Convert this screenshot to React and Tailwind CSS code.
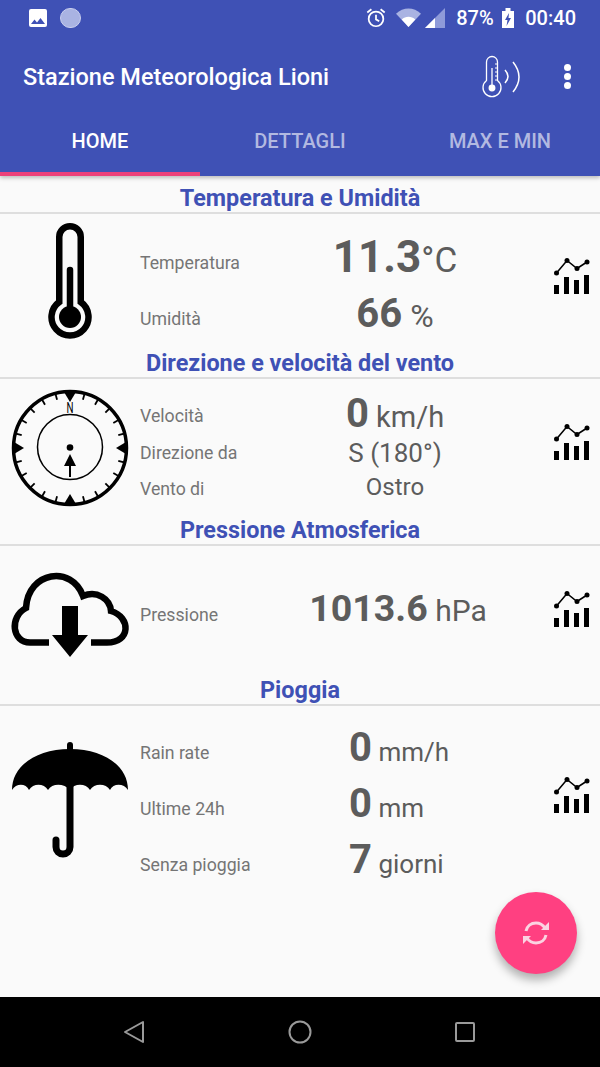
import React from "react";

const ChartIcon = () => (
  <svg viewBox="552 258 38 36" className="w-[38px] h-[36px] text-black">
    <path d="M555.500 273L566 260.500L576 268.500L586 262" fill="none" stroke="currentColor" strokeWidth="1.600" />
    <circle cx="555.500" cy="273" r="2.500" fill="currentColor" />
    <circle cx="566" cy="260.500" r="2.500" fill="currentColor" />
    <circle cx="576" cy="268.500" r="2.500" fill="currentColor" />
    <circle cx="586" cy="262" r="2.500" fill="currentColor" />
    <rect x="553" y="285" width="5" height="9" fill="currentColor" />
    <rect x="563" y="277" width="5" height="17" fill="currentColor" />
    <rect x="573" y="280" width="5" height="14" fill="currentColor" />
    <rect x="583" y="275" width="5" height="19" fill="currentColor" />
  </svg>
);

const Thermometer = () => (
  <svg viewBox="46 222 48 120" className="w-[48px] h-[120px]">
    <path
      d="M59.250 302V237A10.750 10.750 0 0 1 80.750 237V302A18.500 18.500 0 1 1 59.250 302Z"
      fill="none"
      stroke="black"
      strokeWidth="6.500"
    />
    <path d="M70 270V310" stroke="black" strokeWidth="6.500" strokeLinecap="round" />
    <circle cx="70" cy="317" r="11" fill="black" />
  </svg>
);

const ticks = Array.from({ length: 24 }, (_, i) => i * 15);

const Compass = () => (
  <svg viewBox="10 388 120 120" className="w-[120px] h-[120px]">
    <circle cx="70" cy="448" r="56.500" fill="none" stroke="black" strokeWidth="3.500" />
    {ticks.map((a) => (
      <line
        key={a}
        x1="70"
        y1="392"
        x2="70"
        y2="398"
        stroke="black"
        strokeWidth="1.800"
        transform={`rotate(${a} 70 448)`}
      />
    ))}
    {[0, 90, 180, 270].map((a) => (
      <path key={a} d="M64 392H76L70 402Z" fill="black" transform={`rotate(${a} 70 448)`} />
    ))}
    <circle cx="70" cy="447" r="32.500" fill="none" stroke="black" strokeWidth="1.500" />
    <text x="70" y="413" textAnchor="middle" fontSize="14" fill="black" fontFamily="Roboto, sans-serif" textLength="7" lengthAdjust="spacingAndGlyphs">
      N
    </text>
    <circle cx="70" cy="447.500" r="3.300" fill="black" />
    <path d="M70 454L76 466H71V477H69V466H64Z" fill="black" />
  </svg>
);

const Cloud = () => (
  <svg viewBox="10 570 120 88" className="w-[120px] h-[88px]">
    <path
      d="M49 641.500H30C12 641.500 9 616 26 607C28 570 72 564 83 595C97 589 110 598 111 610C131 616 131 641.500 107 641.500H91"
      fill="none"
      stroke="black"
      strokeWidth="6.500"
    />
    <path d="M62 605H78V634H88L70 656L52 634H62Z" fill="black" />
  </svg>
);

const Umbrella = () => (
  <svg viewBox="10 740 120 120" className="w-[120px] h-[120px]">
    <path
      d="M12 790C12 766 36 749 70 749C104 749 128 766 128 790C124 783 113 783 110 790C106 783 94 783 90 790C86 783 74 783 70 790C64 783 52 783 48 790C44 783 33 783 29 790C26 783 16 783 12 790Z"
      fill="black"
    />
    <path d="M70 745V752" stroke="black" strokeWidth="6" strokeLinecap="round" />
    <path d="M70 785V847A7 7 0 0 1 56 847V840" fill="none" stroke="black" strokeWidth="7" strokeLinecap="round" />
  </svg>
);

const StatusBar = () => (
  <div className="h-[35px] flex items-center text-white relative">
    <svg viewBox="0 0 24 24" className="ml-[26px] w-[24px] h-[24px]" fill="white">
      <path d="M21 19V5a2 2 0 0 0-2-2H5a2 2 0 0 0-2 2v14a2 2 0 0 0 2 2h14a2 2 0 0 0 2-2zM8.500 13.500l2.500 3 3.500-4.500 4.500 6H5l3.500-4.500z" />
    </svg>
    <div className="ml-[10px] w-[21px] h-[20px] rounded-full bg-[#a9b3e2] border border-[#c9cfee]" />
    <div className="flex-1" />
    <svg viewBox="0 0 24 24" className="w-[22px] h-[22px] mr-[9px]" fill="none" stroke="white" strokeWidth="1.900">
      <circle cx="12" cy="13" r="8" />
      <path d="M12 8.500V13.500L15.500 15.500M2.500 6L7 2.500M21.500 6L17 2.500" />
    </svg>
    <svg viewBox="0 0 24 18" className="w-[25px] h-[19px] mr-[4px]">
      <path d="M0 5.500C7 -1.500 17 -1.500 24 5.500L12 18Z" fill="#a9b3e2" />
      <path d="M5.500 11C9 7.500 15 7.500 18.500 11L12 18Z" fill="white" />
    </svg>
    <svg viewBox="0 0 20 20" className="w-[20px] h-[20px] mr-[11px]">
      <path d="M0 20L20 0V20Z" fill="#8f9bd9" />
      <path d="M0 20L10 10V20Z" fill="white" />
    </svg>
    <span className="text-[20px] font-medium w-[39px] whitespace-nowrap leading-none">87%</span>
    <svg viewBox="0 0 12 20" className="ml-[7px] w-[12px] h-[20px]">
      <path d="M0 3H3.500V0H8.500V3H12V20H0Z" fill="white" />
      <path d="M7 5L3 12H5.500L4.500 18L9 10H6.500Z" fill="#3f51b5" />
    </svg>
    <span className="ml-[11px] mr-[24px] text-[20px] font-medium leading-none">00:40</span>
  </div>
);

const Toolbar = () => (
  <div className="h-[85px] flex items-center text-white">
    <h1 className="ml-[23px] pt-[1px] text-[23.500px] font-medium whitespace-nowrap">Stazione Meteorologica Lioni</h1>
    <div className="flex-1" />
    <svg viewBox="480 55 42 43" className="w-[42px] h-[43px] mr-[40px] -mt-[3px]" fill="none" stroke="white" strokeWidth="1.300">
      <path d="M484.500 80.500V62A5.500 5.500 0 0 1 495.500 62V80.500A9 9 0 1 1 484.500 80.500Z" />
      <circle cx="490" cy="88" r="2.800" fill="white" />
      <path d="M490 86V68" />
      <path d="M493 64H495M493 68H495M493 72H495M493 76H495M493 80H495" strokeWidth="1" />
      <path d="M503 70Q509 76.500 503 83M511 62Q523 77 511 92" strokeWidth="1.500" />
    </svg>
    <div className="flex flex-col gap-[2px] mr-[29px] -mt-[3px]">
      <div className="w-[7px] h-[7px] rounded-full bg-white" />
      <div className="w-[7px] h-[7px] rounded-full bg-white" />
      <div className="w-[7px] h-[7px] rounded-full bg-white" />
    </div>
  </div>
);

const Tabs = () => (
  <div className="h-[56px] relative grid grid-cols-3 text-center text-[20px] font-medium">
    <div className="text-white pt-[6px] border-b-[4px] border-[#ec407a]">HOME</div>
    <div className="text-[#b2b9e1] pt-[6px]">DETTAGLI</div>
    <div className="text-[#b2b9e1] pt-[6px]">MAX E MIN</div>
  </div>
);

const SectionTitle = ({ children }) => (
  <div className="h-[31px] pt-[3px] border-b-2 border-[#dedede] flex items-center justify-center text-[#3f51b5] text-[23.400px] font-bold">
    {children}
  </div>
);

const Row = ({ label, h, center = true, labelClass = "", valueClass = "", children }) => (
  <div className={`flex items-center shrink-0 ${h}`}>
    <div className={`w-[120px] text-[17.700px] text-[#757575] whitespace-nowrap ${labelClass}`}>{label}</div>
    <div className={`flex-1 text-[#5c5c5c] flex items-baseline whitespace-nowrap ${center ? "justify-center" : "pl-[89px]"} ${valueClass}`}>
      {children}
    </div>
  </div>
);

const Section = ({ title, icon, height, chartClass = "", children }) => (
  <section>
    <SectionTitle>{title}</SectionTitle>
    <div className={`flex items-stretch ${height}`}>
      <div className="w-[140px] flex justify-center items-start shrink-0">{icon}</div>
      <div className="flex-1 flex flex-col">{children}</div>
      <div className={`w-[70px] shrink-0 flex items-center pl-[23px] ${chartClass}`}>
        <ChartIcon />
      </div>
    </div>
  </section>
);

const Big = ({ children }) => <span className="font-bold text-[40px] leading-none">{children}</span>;

export default function App() {
  return (
    <div className="w-[600px] h-[1067px] relative flex flex-col bg-[#fafafa] overflow-hidden font-['Roboto',sans-serif]">
      <header className="bg-[#3f51b5] shadow-[0_2px_4px_rgba(0,0,0,0.25)] z-10">
        <StatusBar />
        <Toolbar />
        <Tabs />
      </header>

      <main className="flex-1 pt-[7px]">
        <Section title="Temperatura e Umidità" height="h-[134px]" chartClass="pb-[10px]" icon={<div className="pt-[8px]"><Thermometer /></div>}>
          <Row label="Temperatura" h="h-[82px] pt-[3px]" labelClass="pt-[13px]">
            <span className="font-bold text-[44px] leading-none">11.3</span>
            <span className="text-[35px] leading-none">°C</span>
          </Row>
          <Row label="Umidità" h="h-[36px]" labelClass="pt-[10px]">
            <span className="font-bold text-[40px] leading-none">66</span>
            <span className="text-[32px] leading-none">&nbsp;%</span>
          </Row>
        </Section>

        <Section title="Direzione e velocità del vento" height="h-[136px]" chartClass="pb-[11px]" icon={<div className="pt-[9px]"><Compass /></div>}>
          <Row label="Velocità" h="h-[37px] mt-[18px]" labelClass="pt-[2px]" valueClass="pb-[4px]">
            <Big>0</Big>
            <span className="text-[29px] leading-none">&nbsp;km/h</span>
          </Row>
          <Row label="Direzione da" h="h-[37px]" labelClass="pt-[2px]">
            <span className="text-[26px] leading-none">S (180°)</span>
          </Row>
          <Row label="Vento di" h="h-[36px]" valueClass="pb-[5px]">
            <span className="text-[24px] leading-none">Ostro</span>
          </Row>
        </Section>

        <Section title="Pressione Atmosferica" height="h-[129px]" chartClass="pb-[4px]" icon={<div className="pt-[25px]"><Cloud /></div>}>
          <Row label="Pressione" h="h-[126px]" labelClass="pt-[12px]" valueClass="pl-[6px]">
            <span className="font-bold text-[37.500px] leading-none">1013.6</span>
            <span className="text-[30px] leading-none">&nbsp;hPa</span>
          </Row>
        </Section>

        <Section title="Pioggia" height="h-[178px]" icon={<div className="pt-[34px]"><Umbrella /></div>}>
          <Row label="Rain rate" h="h-[56px] mt-[13px]" center={false} labelClass="pt-[12px]" valueClass="pt-[2px]">
            <Big>0</Big>
            <span className="text-[26px] leading-none">&nbsp;mm/h</span>
          </Row>
          <Row label="Ultime 24h" h="h-[56px]" center={false} labelClass="pt-[12px]" valueClass="pt-[2px]">
            <Big>0</Big>
            <span className="text-[26px] leading-none">&nbsp;mm</span>
          </Row>
          <Row label="Senza pioggia" h="h-[56px]" center={false} labelClass="pt-[12px]" valueClass="pt-[2px]">
            <Big>7</Big>
            <span className="text-[26px] leading-none">&nbsp;giorni</span>
          </Row>
        </Section>
      </main>

      <button className="absolute left-[495px] top-[892px] w-[82px] h-[82px] rounded-full bg-[#ff4081] shadow-[0_6px_10px_rgba(0,0,0,0.3)] flex items-center justify-center">
        <svg viewBox="0 0 28 28" className="w-[28px] h-[28px]" fill="none" stroke="#fbd3e1" strokeWidth="3">
          <path d="M4 12C5 7 9 4 14 4C18 4 21 6 23 9" />
          <path d="M24 16C23 21 19 24 14 24C10 24 7 22 5 19" />
          <path d="M19 11H27V3Z" fill="#fbd3e1" stroke="none" />
          <path d="M9 17H1V25Z" fill="#fbd3e1" stroke="none" />
        </svg>
      </button>

      <nav className="h-[70px] bg-black flex items-center relative">
        <svg viewBox="0 0 22 24" className="ml-[123px] w-[22px] h-[24px]" fill="none" stroke="#9a9a9a" strokeWidth="2">
          <path d="M20 2V22L2 12Z" strokeLinejoin="round" />
        </svg>
        <svg viewBox="0 0 24 24" className="ml-[143px] w-[24px] h-[24px]" fill="none" stroke="#9a9a9a" strokeWidth="2">
          <circle cx="12" cy="12" r="10.500" />
        </svg>
        <svg viewBox="0 0 20 20" className="ml-[143px] w-[20px] h-[20px]" fill="none" stroke="#9a9a9a" strokeWidth="2">
          <rect x="1" y="1" width="18" height="18" rx="1" />
        </svg>
      </nav>
    </div>
  );
}
